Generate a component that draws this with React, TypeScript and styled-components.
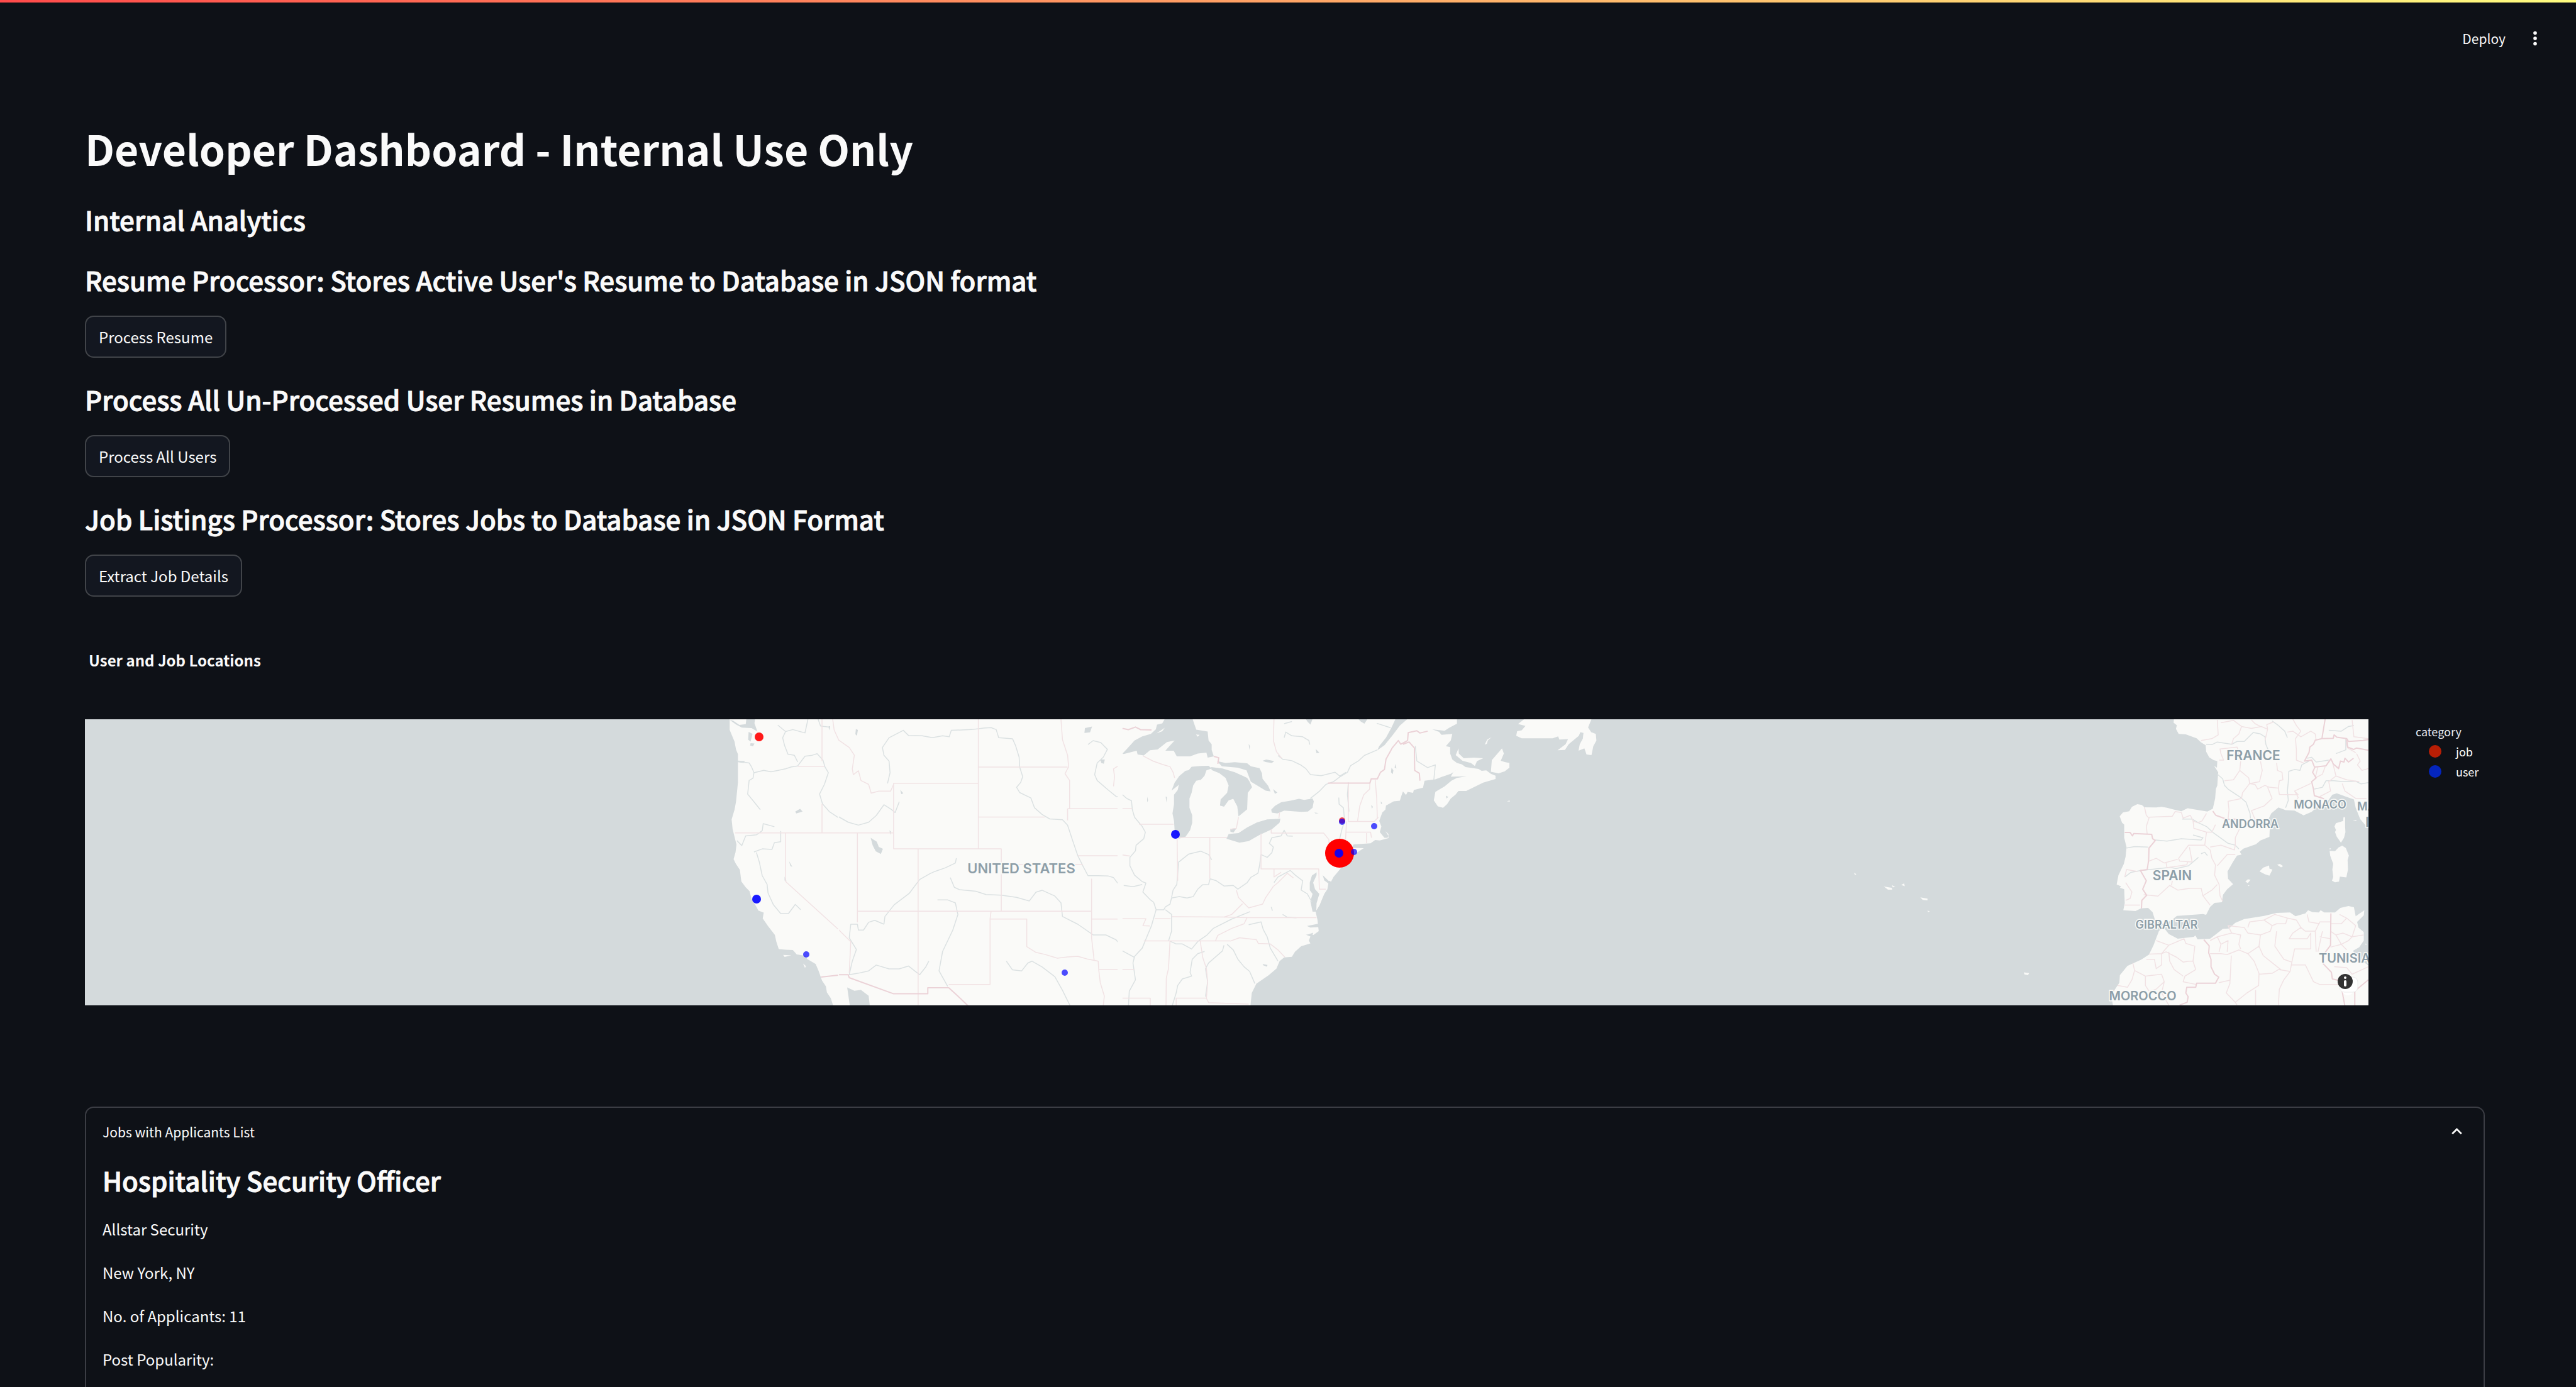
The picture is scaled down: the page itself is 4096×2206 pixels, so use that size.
import React, { useState } from "react";
import styled, { createGlobalStyle } from "styled-components";

const GlobalStyle = createGlobalStyle`
  *, *::before, *::after { box-sizing: border-box; }
  body {
    margin: 0;
    background: #0e1117;
    color: #fafafa;
    font-family: "Noto Sans CJK SC", "Noto Sans", sans-serif;
    font-size: 24px;
  }
  button { font-family: inherit; color: inherit; cursor: pointer; }
`;

/* ---------- page shell ---------- */

const Page = styled.div`
  height: 100vh;
  overflow: hidden;
  background: #0e1117;
`;

const Decoration = styled.div`
  height: 4px;
  background: linear-gradient(90deg, #ff4b4b, #fffd80);
`;

const Header = styled.header`
  display: flex;
  justify-content: flex-end;
  align-items: center;
  gap: 30px;
  height: 113px;
  padding: 0 48px;
`;

const ToolbarButton = styled.button`
  display: flex;
  padding: 0;
  border: 0;
  background: transparent;
  font-size: 21px;
  line-height: 34px;
`;

const Main = styled.main`
  padding: 73px 145px 0 135px;
`;

/* ---------- typography ---------- */

const Title = styled.h1`
  margin: 0;
  font-size: 66px;
  font-weight: 700;
  line-height: 90px;
`;

const Heading = styled.h3`
  margin: 0;
  font-size: 42px;
  font-weight: 500;
  line-height: 58px;
  -webkit-text-stroke: 1px currentColor;
`;

const Text = styled.p`
  margin: 0;
  font-size: 24px;
  line-height: 41px;
`;

/* ---------- processors ---------- */

const Intro = styled.div`
  display: grid;
  gap: 40px;
  margin-bottom: 38px;
`;

const Sections = styled.div`
  display: grid;
  gap: 37px;
`;

const Section = styled.section`
  display: flex;
  flex-direction: column;
  align-items: flex-start;
  gap: 28px;
`;

const ActionButton = styled.button`
  height: 67px;
  padding: 0 20px;
  border: 2px solid #414449;
  border-radius: 14px;
  background: #131720;
  font-size: 24px;
  line-height: 35px;
`;

/* ---------- map chart ---------- */

const Chart = styled.figure`
  margin: 83px 0 161px;
`;

const ChartTitle = styled.figcaption`
  padding-left: 6px;
  margin-bottom: 77px;
  font-weight: 700;
  line-height: 35px;
`;

const ChartRow = styled.div`
  display: flex;
`;

const MapFrame = styled.div`
  position: relative;
  flex: 1;
  height: 455px;
  overflow: hidden;
  background: #d4dadc;
`;

const MapSvg = styled.svg`
  display: block;
  width: 100%;
  height: 100%;

  path { vector-effect: non-scaling-stroke; stroke-linejoin: round; }
  .land { fill: #fafaf8; }
  .water { fill: #d4dadc; }
  .river { fill: none; stroke: #dbe1e2; stroke-width: 1.5px; }
  .state { fill: none; stroke: #f1e2e4; stroke-width: 1.5px; }
  .country { fill: none; stroke: #ebd2d7; stroke-width: 2px; }
`;

const MapLabel = styled.text<{ $size: number }>`
  fill: #8d9ea8;
  stroke: #fafaf8;
  stroke-width: 3px;
  paint-order: stroke;
  font-family: Inter, "Noto Sans", sans-serif;
  font-size: ${(p) => p.$size}px;
  font-weight: 600;
`;

const InfoButton = styled.button`
  position: absolute;
  right: 16px;
  bottom: 16px;
  width: 36px;
  height: 36px;
  padding: 0;
  border: 0;
  background: transparent;
`;

const Legend = styled.div`
  width: 185px;
  padding: 6px 0 0 75px;
  font-size: 18px;
`;

const LegendTitle = styled.div`
  margin-bottom: 3px;
  line-height: 26px;
  color: #e6eaf1;
`;

const LegendList = styled.ul`
  margin: 0;
  padding: 0 0 0 21px;
  list-style: none;
`;

const LegendItem = styled.li<{ $color: string }>`
  display: flex;
  align-items: center;
  gap: 23px;
  line-height: 32px;

  &::before {
    content: "";
    width: 20px;
    height: 20px;
    border-radius: 50%;
    background: ${(p) => p.$color};
  }
`;

/* ---------- expander ---------- */

const Expander = styled.section`
  border: 2px solid #3b3d44;
  border-radius: 14px;
`;

const ExpanderHeader = styled.button`
  display: flex;
  justify-content: space-between;
  align-items: center;
  width: 100%;
  height: 75px;
  padding: 0 26px;
  border: 0;
  background: transparent;
  font-size: 21px;
  text-align: left;
`;

const ExpanderBody = styled.div`
  display: grid;
  gap: 28px;
  padding: 11px 26px 60px;
`;

/* ---------- map data ---------- */

type Layer = { kind: "land" | "water" | "river" | "state" | "country"; d: string };
type Region = { id: string; transform: string; layers: Layer[] };

const regions: Region[] = [
  {
    id: "plains",
    transform: "translate(1197.5 -17) scale(.8112 .309)",
    layers: [
      { kind: "land", d: "M-4 40H600V1545H-4Z" },
      { kind: "water", d: "M18 1435L32 1452 45 1448 60 1478 63 1545H24Z" },
      { kind: "water", d: "M64 665L76 685 80 712 88 722 84 748 74 735 68 705ZM484 100L498 92 494 122 483 125ZM514 262H523L521 284 516 280ZM35 105L39 110 37 140 34 132ZM101 626L104 634 102 650ZM122 418L128 436 124 440Z" },
      { kind: "river", d: "M97 385L102 330 100 270 90 240 87 200 100 150 128 112 138 138 165 140 185 150 205 140 218 145 222 112 262 108 285 100 300 98 310 108 315 150 342 155 348 190 355 250 356 300 362 350 358 380 350 405 356 432 378 460 385 510 400 545 415 568 440 572 450 600 460 680 470 757 480 810 490 860 510 860 530 862 540 870 550 905 560 915 580 905 597 905" },
      { kind: "river", d: "M490 185L500 165 515 175 528 210 520 250 508 280 503 340 508 370 530 420 545 452 562 460 575 490 577 515" },
      { kind: "river", d: "M90 1110L92 1070 110 1010 140 950 160 880 180 850 190 838 210 820 230 795 232 770M220 870L228 920 238 932 270 940 290 957 320 960 350 972 375 990 388 945 400 935 425 965 437 1000 440 1070 470 1110 500 1165 525 1165 545 1190 560 1240 578 1275" },
      { kind: "river", d: "M90 1110L72 1090 60 1100 50 1140 40 1140 38 1110 25 1110 22 1180 36 1240 28 1300 22 1370 40 1362 60 1350 75 1320 100 1340 120 1340 138 1325 160 1370 172 1330 178 1300M195 985L215 985 230 1000 235 1060 225 1140 205 1250 198 1350 215 1430" },
      { kind: "river", d: "M330 1300L342 1345 360 1350 372 1310 380 1300 400 1330 425 1380 440 1450 455 1530M0 555L20 585 40 600 60 585 75 550 90 495 105 520 112 535 120 480" },
      { kind: "state", d: "M275 55V720M275 301H450M437 55L440 160 450 240 452 300 445 335 454 370V515M275 384H109V722H320V1043M0 640H109M38 640V1100M38 1043H497M157 722V1527M275 558H405M450 515H577M450 515V575M470 757H568M320 803H480M497 875V1180L502 1295 510 1300 511 1343H578M511 1343L514 1410 522 1480 520 1527M300 1043L298 1083V1420H217M298 1083H370V1225L388 1255 405 1265 430 1285 450 1278 470 1275 490 1290 510 1300M497 1083H603L598 1118 612 1120M568 1490H612V1527M0 160L22 200 32 240 28 310 30 340 40 320 45 370 60 390 65 435 80 425 103 425 109 390M0 1135L25 1200 22 1360M555 235L552 290 540 310 542 350 540 400" },
      { kind: "country", d: "M0 1370H20L22 1385 109 1468H176V1437H217L235 1480 255 1530" },
    ],
  },
  {
    id: "west",
    transform: "translate(-13.9 -17) scale(.7726 .309)",
    layers: [
      { kind: "land", d: "M1345 40V110L1350 140 1355 170 1358 210 1362 235 1362 380 1358 480 1355 520 1349 570 1351 620 1355 660 1359 700 1357 740 1353 775 1358 800 1366 830 1369 890 1378 920 1386 940 1390 980 1400 1020 1404 1040 1415 1050 1413 1080 1424 1120 1438 1165 1441 1200 1446 1238 1460 1241 1475 1243 1483 1265 1500 1272 1505 1290 1522 1315 1528 1350 1535 1400 1543 1430 1545 1460 1553 1490 1560 1545H1570V40Z" },
      { kind: "water", d: "M1345 58L1352 62 1365 84 1378 80 1380 40H1398L1396 75 1402 118 1390 100 1370 98 1358 82ZM1388 178L1396 180 1393 194 1387 190ZM1384 120L1392 130 1388 170 1383 160ZM1362 268L1376 270 1374 280 1362 276ZM1480 530L1490 516 1495 530 1482 540ZM1467 785L1474 815 1470 810ZM1458 865L1462 888 1458 885ZM1548 92L1552 90 1550 112Z" },
      { kind: "land", d: "M1455 1268L1472 1270 1458 1278ZM1496 1312L1502 1325 1500 1335ZM1495 1345L1501 1360Z" },
      { kind: "river", d: "M1362 272L1385 280 1390 300 1395 330 1415 318 1430 325 1445 318 1460 310 1472 300 1485 295 1500 245 1515 240 1525 232 1537 265 1541 300 1548 330 1540 390 1530 440 1536 490 1550 530 1568 560M1395 330L1393 358 1385 370 1382 440 1395 480 1408 520M1485 275L1478 240 1465 235 1458 190 1454 150 1460 118 1475 108 1500 125 1506 55M1444 85L1460 118M1527 55L1532 90 1548 95" },
      { kind: "river", d: "M1400 740L1406 790 1412 860 1422 905 1424 950 1435 1010 1450 1055H1466L1480 1008 1491 1035M1360 680L1370 705 1378 655 1400 650 1412 628 1414 592 1437 608M1450 630V685L1437 690 1432 725 1412 722 1395 738" },
      { kind: "state", d: "M1535 55V270M1485 297H1540M1535 490V640M1356 640H1570M1460 640V890L1568 1135M1557 55L1560 110 1570 165" },
      { kind: "country", d: "M1533 1382L1568 1372" },
    ],
  },
  {
    id: "east",
    transform: "translate(1651.8 -4.9) scale(.4906 .2974)",
    layers: [
      { kind: "land", d: "M-20 0H1080V40L1055 62 1040 78 1000 70 1022 84 1030 100 1065 95 1060 130 1044 160 1058 165 1058 200 1065 232 1080 250 1096 258 1108 272 1150 282 1160 292 1175 290 1190 308 1205 318 1205 336 1165 355 1140 375 1110 400 1085 400 1075 420 1060 440 1048 470 1035 490 1018 482 1005 450 1010 405 1040 375 1062 345 1080 330 1112 322 1060 323 1068 300 1086 280 1060 308 1030 325 1010 338 975 345 970 382 940 395 938 410 920 405 915 422 905 402 900 425 895 452 875 455 850 478 848 500 838 515 828 560 835 590 830 620 845 650 855 650 858 640 848 615 858 630 858 652 830 665 815 662 800 680 745 686 738 704 778 706 760 725 735 745 700 820 690 840 680 860 672 885 665 880 660 925 650 950 645 970 635 1010 622 1045 628 1090 632 1150 615 1170 590 1168 605 1178 600 1200 605 1215 575 1230 555 1260 545 1287 520 1290 505 1310 495 1350 470 1385 430 1430 415 1480 410 1560H-20Z" },
      { kind: "land", d: "M1085 172L1086 200 1102 225 1135 222 1165 225 1145 240 1138 266 1125 250 1098 238 1076 208ZM1226 172L1232 200 1222 238 1235 245 1250 250 1250 275 1235 295 1215 306 1190 297 1193 235ZM1310 0L1278 42 1302 52 1290 75 1275 80 1272 105 1290 118 1390 118 1408 108 1412 125 1440 122 1432 150 1406 182 1430 180 1442 150 1475 105 1480 85 1490 90 1488 120 1478 150 1474 185 1493 172 1500 205 1516 208 1522 160 1532 130 1530 95 1515 85 1505 60 1520 0ZM1192 112L1178 125 1170 152 1177 148 1180 130ZM1242 456L1250 450 1252 456Z" },
      { kind: "water", d: "M138 0H220L235 72 272 82 275 130 285 150 285 180 292 215 272 222 268 195 240 200 215 215 172 215 162 185 135 185 148 160 165 130 140 138 110 178 85 182 65 210 45 205 42 185 0 202 -4 200 12 172 35 130 60 108 88 95 104 70 108 45 125 38Z" },
      { kind: "land", d: "M106 92L133 62 125 80ZM234 98L246 100 240 110Z" },
      { kind: "water", d: "M250 266L275 265 285 280 268 290 262 318 250 340 235 345 225 370 220 410 213 440 213 490 222 530 222 570 215 610 200 645 178 655 165 612 163 560 158 520 163 470 163 420 175 395 182 340 205 300 220 270ZM200 292L212 288 195 335 175 372 155 398 165 355 180 320Z" },
      { kind: "water", d: "M283 272L320 280 360 300 385 318 400 330 408 350 416 380 402 410 400 498 372 536 368 482 355 442 340 450 325 484 312 478 314 445 335 410 340 370 330 330 310 305 285 288ZM302 240L330 250 360 246 400 252 412 268 440 278 448 305 450 335 468 372 476 402 460 398 430 368 412 350 405 320 398 290 370 275 318 268ZM345 602L366 598 356 622 346 618ZM484 390L498 408 490 415Z" },
      { kind: "water", d: "M508 548L465 552 432 568 400 595 372 625 340 630 333 655 375 676 405 668 440 635 480 605 505 570ZM612 440L585 448 568 442 540 452 510 460 490 480 478 500 480 516 498 520 520 505 575 512 597 510 612 490 616 455Z" },
      { kind: "water", d: "M885 0H930L895 50 870 105 845 155 822 182 828 160 850 115 868 60ZM625 835L610 852 603 890 603 930 612 950 605 990 612 1045H624L625 1000 634 950 620 925 614 890 625 850ZM645 850L665 882 668 900 650 878ZM594 1122L630 1110 632 1128 605 1130ZM592 1170L614 1158 612 1170ZM590 15H612L605 45 596 30ZM760 15H790L780 40 768 28Z" },
      { kind: "water", d: "M450 238L462 232 488 240 480 250 460 245ZM868 275L874 290 872 310 866 300ZM880 255L884 280 878 275ZM1044 425L1052 432 1046 440ZM450 1325L466 1330 464 1340 452 1332ZM618 515L632 518 622 521ZM136 430L140 432 138 462ZM76 430L79 450 76 460ZM802 475L808 485 804 495ZM833 455L838 465 834 470ZM622 175L634 195 625 198ZM405 148L409 160 407 180Z" },
      { kind: "river", d: "M822 180L780 210 760 240 735 265 725 300 700 325 680 350 655 365 635 400 605 440M520 115L525 85 545 105 580 110 600 130 603 152M520 40L545 28M820 38L865 62M700 655L708 600 716 560 712 490 698 470 697 435M728 355L725 420 730 510" },
      { kind: "river", d: "M445 740L440 800 435 840 412 862 400 890 370 925 355 905 325 908 300 880 280 870 275 900 255 902 240 925 225 965 205 972 180 965 155 972 150 1005 135 1020 130 1035 105 1035M-4 420L10 440 25 452 28 500 35 540 60 590 70 620 65 655 40 690 38 720 20 755 20 800 35 850 60 885 72 892 62 940 85 980 97 995 105 1035 97 1080 90 1120 75 1180 60 1240 35 1285 30 1320 38 1410 18 1470 15 1560" },
      { kind: "river", d: "M155 970L160 930 172 900 178 780 210 738 250 722 275 740 285 768M335 1220L355 1250 370 1300 390 1340 408 1365 425 1430M325 1225L320 1255 275 1320 265 1350 272 1420 265 1500M150 1203L170 1218 190 1218 220 1245 240 1205 270 1170 290 1135 350 1085 410 1045M405 1115L445 1100 452 1140 465 1180 475 1240 500 1310M262 1258L240 1270 222 1300 215 1370 220 1390 190 1405 175 1440 170 1480 155 1560M135 1035L155 1060 155 1150 145 1203" },
      { kind: "river", d: "M487 890L500 860 540 825 556 850 580 880 575 930 595 950 610 995M445 740L465 755 480 730 485 700 472 680 480 650 510 640 520 610 530 640 548 642M500 210L515 230 545 238 575 262 590 280 605 312 640 318 685 300 700 320 720 300M945 160L950 240 985 275 1010 260 1005 340M0 905L30 912 60 900M-4 1255L35 1290M478 1020L482 1040M515 1060L530 1075 560 1078" },
      { kind: "state", d: "M155 1072L325 1074 400 1077H625M-4 1083H72L62 1120 85 1122M100 1083H152M65 1202H345M150 1203L145 1350 138 1400 137 1550M248 1203L256 1290 268 1350 272 1420 268 1508M170 1550V1508H268L275 1532 405 1540M-4 1508H86V1550M173 655L175 880M279 650V870M173 649H335M50 578H162M-4 495H28M445 628V817H632L634 925H655M478 605V625H648L665 660V690M728 355V563H812L825 540M815 340L820 440 822 550M798 350L797 390 778 420 765 480 758 560M720 620H800L803 650M787 625V680M722 563L718 690" },
      { kind: "state", d: "M345 1203L375 1185 430 1195 436 1215 475 1218 500 1250 522 1288M297 1203L305 1172 350 1135 390 1110 400 1076M365 930L372 970 390 1000 405 1025 450 1005 460 970 485 910 500 890 530 840 550 865M385 1003L350 1060 325 1075M487 817V860L510 835M487 15L485 130 495 190 512 225M62 212L95 240 125 258 150 270 160 300 165 330M-4 742L20 748M-4 1354H34M505 515L503 545M372 540L365 600 345 605" },
      { kind: "country", d: "M-4 65L15 72 38 58 55 72 90 74M292 215L308 222 305 255M662 358H798L802 335 822 335 832 300 845 285 850 230 870 170 890 130 898 150 920 130 922 88 950 78 960 90 985 80M905 150L925 138 942 170 943 290 958 305 960 345" },
    ],
  },
  {
    id: "atlantic",
    transform: "translate(2469.5 -17) scale(.9511 .309)",
    layers: [
      { kind: "land", d: "M361 845L365 852 363 858ZM411 916L424 922 425 932 418 932ZM424 908L430 918 426 920ZM440 908L445 900 446 914ZM472 972L484 978V987L476 985ZM484 1040L488 1044 485 1048ZM645 1358L654 1362 652 1372 646 1368Z" },
    ],
  },
  {
    id: "europe",
    transform: "translate(3196.3 -4.9) scale(.2858 .2974)",
    layers: [
      { kind: "land", d: "M440 0L437 35 455 48 450 68 465 95 505 97 565 118 590 140 615 155 618 190 635 220 660 235 680 240 678 275 662 265 685 300 680 370 672 390 668 440 655 495 625 510 545 497 515 492 480 508 440 500 400 490 370 485 340 488 275 487 260 475 235 470 205 485 190 508 155 515 137 535 150 570 162 580 162 650 175 700 170 750 160 790 130 850 120 900 145 910 138 918 162 925 165 1000 157 1038 225 1042 255 1028 295 1025 320 1048 335 1095 375 1110 420 1095 455 1068 540 1062 600 1058 618 1062 640 1020 665 998 705 995 712 955 735 925 768 898 740 870 737 830 770 775 790 745 815 740 805 725 825 708 895 685 920 665 970 645 972 600 960 560 980 520 1020 488 1060 502 1110 505 1160 530 1205 512 1230 490 1290 460 1320 420 1345 412 1395 430 1440 445 1450 490 1475 550 1510 590 1530 600V0Z" },
      { kind: "land", d: "M1382 540H1391V590L1393 620 1385 650 1368 676 1345 645 1335 620 1340 608 1332 590 1340 572 1380 560ZM1375 692L1395 705 1412 745 1405 770 1407 820 1398 862 1362 858 1357 885 1335 888 1318 880 1325 860 1320 820 1325 790 1308 745 1305 720 1335 722 1355 702ZM1303 708L1312 706 1308 714ZM915 830L935 810 968 798 970 815 987 820 970 853 945 845ZM1013 795L1028 790 1046 802 1035 808ZM836 885L850 872 865 875 850 892ZM850 903L860 905 853 908ZM1433 556L1455 555 1452 560ZM1503 1215L1512 1220 1506 1224Z" },
      { kind: "land", d: "M102 1560L93 1510 108 1465 135 1425 138 1385 180 1335 255 1303 300 1275 325 1225 355 1150 375 1130 390 1140 410 1165 460 1190 550 1180 558 1172 570 1193 640 1190 670 1168 710 1138 745 1135 780 1105 830 1085 940 1068 1010 1052 1085 1050 1115 1070 1170 1055 1185 1038 1210 1048 1245 1050 1255 1038 1275 1050 1335 1050 1365 1025 1410 1015 1440 1022 1450 1070 1498 1038 1495 1065 1458 1100 1465 1130 1495 1155 1495 1200 1470 1235 1435 1255 1460 1290 1530 1340V1560Z" },
      { kind: "river", d: "M618 150L650 152 680 138 760 150 790 135 830 135 880 87 920 95 945 110 950 150 965 185M680 310L710 335 720 370 740 390 810 435 840 460 862 520 865 550M1060 490L1075 450 1070 400 1075 350 1078 295 1110 285 1140 290 1150 260 1190 240M1180 225L1205 220 1230 245 1300 235M985 25L1020 50 1055 80 1070 115M1300 75L1370 80 1410 55 1440 50M1220 390L1265 380 1285 345 1330 345 1380 350 1450 348 1480 362 1520 355M1340 200L1395 180 1395 120" },
      { kind: "river", d: "M335 662L400 668 480 655 590 662 600 650 545 635M175 705L220 697 295 700M165 860L200 835 255 825 420 808 450 815 520 800 575 755M485 550L540 550 575 570 620 590 660 625 740 680 780 690 800 710M590 735L610 728 625 745" },
      { kind: "state", d: "M680 20L685 100 650 120 590 130M700 35L770 22 815 55 800 95 770 120 760 150M815 55L870 65 925 55 960 70 945 130M870 20L890 40 920 55M960 70L955 45 995 30M1145 80L1115 120 1120 180 1120 235 1160 250M1070 85L1100 80 1145 110 1200 80 1225 95 1230 130M1100 15L1120 50 1145 80M690 235H715L700 200 695 175 790 165 800 200M810 240L805 290 770 340 720 345M805 290L855 330 860 360 915 350 930 290 920 240M860 360L820 410 815 440 740 455 745 500 740 550M860 360L890 365 905 390 945 370 970 380 1020 385 1025 345 1045 340 1040 300 1015 290 1010 250M960 380L985 440 940 480 870 505 885 540 900 570M1020 385L1025 418 1130 420 1110 400 1200 360M1110 400L1130 435 1110 470" },
      { kind: "state", d: "M275 487L285 530 300 545 285 590 290 630M300 540L430 535 445 510 480 515 490 545 530 530 545 560 570 570 595 560 620 520M545 560L550 600 620 620 650 620 670 580M620 620L610 690 640 715 650 760 670 795 665 850 690 900 695 960 710 990M610 690L520 690 465 760 470 775 540 780 525 700M300 775L340 760 385 785 460 765M395 785L400 810 510 795 515 780M640 700L700 690 775 715 780 690 780 650 805 600M680 800L735 740 780 740M530 920H590L600 960 650 930 680 900M600 960L640 1010M270 955L350 962 415 905 460 930 530 920M425 905L430 880M165 860L175 820 235 830M170 890L205 940 195 975 170 985M165 1010L250 1010" },
      { kind: "state", d: "M1240 270L1225 330 1265 310 1280 270M1320 240L1340 320 1300 350 1310 400 1250 430M1340 320L1400 340 1470 350M1375 360L1390 400 1450 440 1510 440M1455 200L1475 240 1460 260 1485 290 1520 280M1430 20L1440 110 1520 120M1395 120L1405 170 1450 195" },
      { kind: "state", d: "M340 1200L410 1225 370 1270 300 1272M410 1225L495 1190 505 1215 555 1230 545 1310 520 1310 490 1315 455 1290 395 1260 370 1270 370 1330 340 1350 330 1300 285 1300M545 1310L560 1355 500 1390 490 1420 565 1435M410 1260L415 1310 440 1355 490 1390M210 1320L220 1360 280 1390 370 1380 385 1420 340 1460 310 1470M280 1390L280 1440 300 1470M220 1360L205 1410 180 1450 125 1440M385 1420L370 1480 410 1545" },
      { kind: "state", d: "M640 1270L700 1270 735 1275 800 1250 850 1270 885 1310 912 1375 910 1440 845 1480 780 1530 730 1480 750 1430 758 1280M688 1425L750 1412M912 1380L985 1375 1020 1355 1085 1365M1085 1365L1050 1410 1025 1460 1020 1545M780 1530L790 1545M893 1465V1545M912 1230L935 1280 1000 1330 1040 1360M1000 1230L1050 1300 1095 1315 1110 1245 1200 1245M1090 1330H1170L1190 1370 1215 1420 1250 1435H1370M1095 1315L1085 1365M850 1270L912 1230 920 1170M1000 1230L1010 1150" },
      { kind: "state", d: "M640 1200L680 1180 700 1220 690 1260M680 1180L760 1160 810 1170 800 1220 810 1245M760 1160L740 1120 830 1130 850 1160 920 1170 975 1150 985 1120 940 1090 860 1100 850 1130M700 1220L740 1200 735 1260M985 1120L1010 1110 1060 1110 1070 1080 1120 1090 1145 1130 1100 1160 1080 1190 1180 1190 1200 1160 1200 1245M940 1090L1000 1060 1070 1080M1145 1130L1170 1150 1225 1150 1250 1100 1310 1100M1180 1060L1190 1100 1250 1110M1225 1150L1230 1260M1250 1180L1310 1190M1265 1150L1240 1260M1310 1110L1370 1110 1400 1080 1360 1060M1400 1080L1450 1120 1430 1180 1380 1160 1340 1170 1310 1150M1340 1170L1370 1220 1310 1235M1370 1220L1410 1200 1430 1180 1495 1170M1400 1250L1370 1220M1330 1340L1400 1345 1430 1380 1520 1340" },
      { kind: "country", d: "M165 622L195 622 208 640 215 628 315 632 320 655 335 665 300 705 298 770 290 820 252 825 285 880 265 925 287 958 260 985 258 1028M655 508L672 530 735 552 790 550M1280 15L1262 120 1225 128 1215 150 1195 165 1190 195 1165 240 1205 235 1222 275 1210 300 1230 330 1205 350 1215 390 1220 425 1275 442M1222 272L1285 265 1312 228 1325 255 1355 280 1365 240 1385 245 1390 225 1410 245 1438 225M1262 120L1325 118 1330 100 1345 112 1400 120 1410 135 1490 130 1520 125M1400 125L1405 165 1438 178 1455 170 1520 182" },
      { kind: "country", d: "M605 1195L635 1228 632 1265 645 1300 645 1340 665 1380 688 1395 670 1428H565L560 1450H510L505 1480 518 1500 512 1530 470 1545M1312 1055L1310 1225 1275 1270 1270 1325 1315 1370 1320 1405 1365 1415 1380 1500 1390 1550M1520 1410L1445 1470 1445 1550" },
    ],
  },
];

const labels = [
  { text: "UNITED STATES", x: 1489, y: 245, size: 22, anchor: "middle" },
  { text: "FRANCE", x: 3448, y: 65, size: 21, anchor: "middle" },
  { text: "MONACO", x: 3554, y: 142, size: 18, anchor: "middle" },
  { text: "MA", x: 3613, y: 145, size: 18, anchor: "start" },
  { text: "I", x: 3626, y: 171, size: 21, anchor: "start" },
  { text: "ANDORRA", x: 3443, y: 173, size: 18, anchor: "middle" },
  { text: "SPAIN", x: 3319, y: 256, size: 21, anchor: "middle" },
  { text: "GIBRALTAR", x: 3310, y: 333, size: 18, anchor: "middle" },
  { text: "TUNISIA", x: 3552, y: 387, size: 20, anchor: "start" },
  { text: "MOROCCO", x: 3272, y: 447, size: 20, anchor: "middle" },
] as const;

const pins = [
  { x: 1072, y: 28, r: 7, color: "#ff0000", opacity: 0.9 },
  { x: 1068, y: 286, r: 7, color: "#0000ff", opacity: 0.9 },
  { x: 1147, y: 374, r: 5, color: "#0000ff", opacity: 0.7 },
  { x: 1734, y: 183, r: 7, color: "#0000ff", opacity: 0.9 },
  { x: 1558, y: 403, r: 5, color: "#0000ff", opacity: 0.7 },
  { x: 1999, y: 161, r: 5, color: "#ff0000", opacity: 0.7 },
  { x: 1999, y: 163, r: 5, color: "#0000ff", opacity: 0.7 },
  { x: 2050, y: 170, r: 5, color: "#0000ff", opacity: 0.7 },
  { x: 1995, y: 213, r: 23, color: "#ff0000", opacity: 1 },
  { x: 1994, y: 213, r: 7, color: "#0000ff", opacity: 0.9 },
  { x: 2018, y: 211, r: 5, color: "#0000ff", opacity: 0.7 },
];

/* ---------- components ---------- */

function LocationMap() {
  return (
    <MapFrame>
      <MapSvg viewBox="0 0 3631 455" preserveAspectRatio="xMidYMid slice" role="img" aria-label="Map of user and job locations">
        {regions.map((region) => (
          <g key={region.id} transform={region.transform}>
            {region.layers.map((layer, i) => (
              <path key={i} className={layer.kind} d={layer.d} />
            ))}
          </g>
        ))}
        {labels.map((l) => (
          <MapLabel key={l.text} x={l.x} y={l.y} $size={l.size} textAnchor={l.anchor}>
            {l.text}
          </MapLabel>
        ))}
        {pins.map((p, i) => (
          <circle key={i} cx={p.x} cy={p.y} r={p.r} fill={p.color} fillOpacity={p.opacity} />
        ))}
      </MapSvg>
      <InfoButton aria-label="Toggle attribution">
        <svg width="36" height="36" viewBox="0 0 36 36">
          <circle cx="19" cy="26" r="10" fill="#fff" />
          <rect x="6" y="7" width="29" height="24" rx="8" fill="#fff" stroke="#ececec" />
          <circle cx="15" cy="14" r="12" fill="#333" />
          <circle cx="15" cy="8" r="2" fill="#fff" />
          <path d="M15 14v6" stroke="#fff" strokeWidth="4" strokeLinecap="round" />
        </svg>
      </InfoButton>
    </MapFrame>
  );
}

const processors = [
  { title: "Resume Processor: Stores Active User's Resume to Database in JSON format", action: "Process Resume" },
  { title: "Process All Un-Processed User Resumes in Database", action: "Process All Users" },
  { title: "Job Listings Processor: Stores Jobs to Database in JSON Format", action: "Extract Job Details" },
];

export default function App() {
  const [open, setOpen] = useState(true);

  return (
    <Page>
      <GlobalStyle />
      <Decoration />
      <Header>
        <ToolbarButton>Deploy</ToolbarButton>
        <ToolbarButton aria-label="Main menu">
          <svg width="34" height="34" viewBox="0 0 24 24" fill="currentColor">
            <circle cx="12" cy="6" r="2" />
            <circle cx="12" cy="12" r="2" />
            <circle cx="12" cy="18" r="2" />
          </svg>
        </ToolbarButton>
      </Header>
      <Main>
        <Intro>
          <Title>Developer Dashboard - Internal Use Only</Title>
          <Heading>Internal Analytics</Heading>
        </Intro>
        <Sections>
          {processors.map((p) => (
            <Section key={p.title}>
              <Heading>{p.title}</Heading>
              <ActionButton>{p.action}</ActionButton>
            </Section>
          ))}
        </Sections>
        <Chart>
          <ChartTitle>User and Job Locations</ChartTitle>
          <ChartRow>
            <LocationMap />
            <Legend>
              <LegendTitle>category</LegendTitle>
              <LegendList>
                <LegendItem $color="#b81e05">job</LegendItem>
                <LegendItem $color="#0425bd">user</LegendItem>
              </LegendList>
            </Legend>
          </ChartRow>
        </Chart>
        <Expander>
          <ExpanderHeader aria-expanded={open} onClick={() => setOpen(!open)}>
            Jobs with Applicants List
            <svg width="33" height="33" viewBox="0 0 24 24" fill="currentColor" aria-hidden="true">
              <path d="M12 8l-6 6 1.41 1.41L12 10.83l4.59 4.58L18 14z" />
            </svg>
          </ExpanderHeader>
          {open && (
            <ExpanderBody>
              <Heading>Hospitality Security Officer</Heading>
              <Text>Allstar Security</Text>
              <Text>New York, NY</Text>
              <Text>No. of Applicants: 11</Text>
              <Text>Post Popularity:</Text>
            </ExpanderBody>
          )}
        </Expander>
      </Main>
    </Page>
  );
}
